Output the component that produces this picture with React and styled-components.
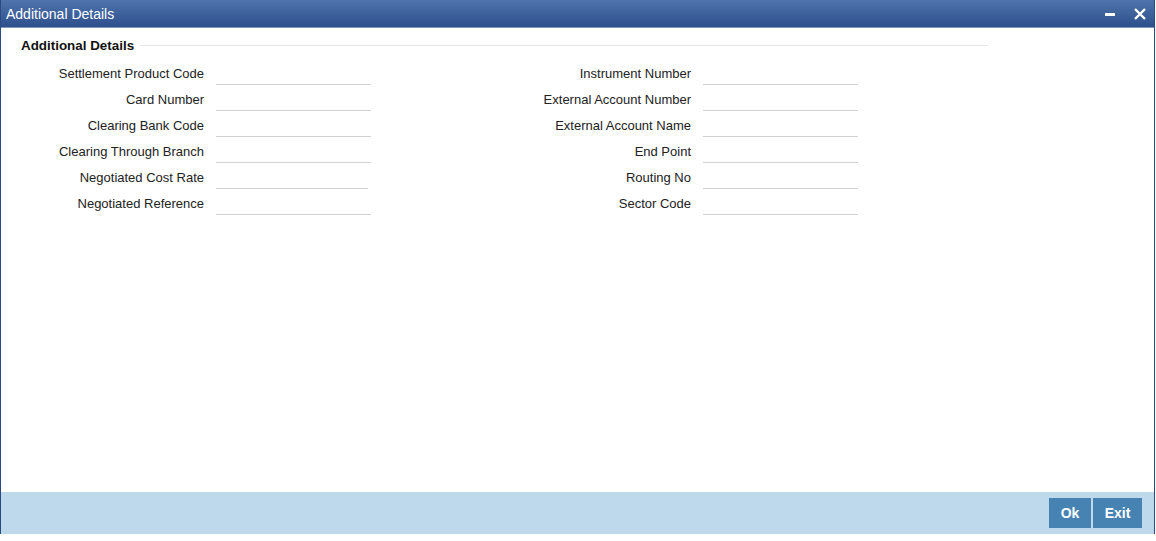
import React from "react";
import styled, { createGlobalStyle } from "styled-components";

const Global = createGlobalStyle`
  html, body { margin: 0; padding: 0; background: #fff; }
  body { font-family: "Liberation Sans", Arial, sans-serif; }
`;

const Window = styled.div`
  width: 1153px;
  height: 534px;
  display: flex;
  flex-direction: column;
  border-left: 1px solid #2a4b82;
  border-right: 1px solid #2a4b82;
  background: #fff;
`;

const TitleBar = styled.div`
  height: 27px;
  flex: none;
  display: flex;
  align-items: center;
  justify-content: space-between;
  padding: 0 6px 0 5px;
  background: linear-gradient(#4f74ab, #2d508d);
  border-bottom: 1px solid #7f97b8;
  color: #fff;
  font-size: 14px;
`;

const Controls = styled.div`
  display: flex;
  align-items: center;
  gap: 18px;
  padding-right: 2px;
`;

const Body = styled.div`
  flex: 1;
  padding: 9px 0 0 20px;
`;

const Section = styled.div`
  width: 967px;
`;

const Legend = styled.div`
  display: flex;
  align-items: center;
  gap: 6px;
  height: 16px;
  font-size: 13.4px;
  font-weight: bold;
  color: #111;
  &::after {
    content: "";
    flex: 1;
    height: 1px;
    background: #e6e6e6;
  }
`;

const Columns = styled.div`
  display: grid;
  grid-template-columns: 350px 350px;
  column-gap: 137px;
  margin-top: 7px;
`;

const Column = styled.div`
  display: flex;
  flex-direction: column;
`;

const Row = styled.div`
  display: grid;
  grid-template-columns: 183px 155px;
  column-gap: 12px;
  align-items: center;
  height: 26px;
`;

const Label = styled.label`
  text-align: right;
  font-size: 13px;
  color: #222;
  white-space: nowrap;
`;

const Input = styled.input`
  box-sizing: border-box;
  width: ${(p) => p.$w || 155}px;
  height: 21px;
  margin-top: 2px;
  border: none;
  border-bottom: 1px solid #d2d2d2;
  outline: none;
  background: transparent;
  font-family: inherit;
  font-size: 13px;
  padding: 0 3px;
`;

const Footer = styled.div`
  height: 42px;
  flex: none;
  display: flex;
  align-items: center;
  justify-content: flex-end;
  gap: 2px;
  padding-right: 12px;
  background: #bed9ec;
`;

const Button = styled.button`
  height: 30px;
  width: ${(p) => p.$w}px;
  border: none;
  background: #4682b2;
  color: #fff;
  font-family: "Liberation Sans", Arial, sans-serif;
  font-weight: bold;
  font-size: 14px;
  padding: 0;
  cursor: pointer;
`;

const left = [
  ["Settlement Product Code"],
  ["Card Number"],
  ["Clearing Bank Code"],
  ["Clearing Through Branch"],
  ["Negotiated Cost Rate", 152],
  ["Negotiated Reference"],
];

const right = [
  ["Instrument Number"],
  ["External Account Number"],
  ["External Account Name"],
  ["End Point"],
  ["Routing No"],
  ["Sector Code"],
];

function Field({ label, w }) {
  return (
    <Row>
      <Label>{label}</Label>
      <Input $w={w} type="text" />
    </Row>
  );
}

export default function App() {
  return (
    <>
      <Global />
      <Window>
        <TitleBar>
          <span>Additional Details</span>
          <Controls>
            <svg width="11" height="11" viewBox="0 0 11 11">
              <rect x="0" y="5" width="10" height="3" fill="#fff" />
            </svg>
            <svg width="12" height="12" viewBox="0 0 12 12">
              <path d="M1 1 L11 11 M11 1 L1 11" stroke="#fff" strokeWidth="2.4" />
            </svg>
          </Controls>
        </TitleBar>
        <Body>
          <Section>
            <Legend>Additional Details</Legend>
            <Columns>
              <Column>
                {left.map(([l, w]) => (
                  <Field key={l} label={l} w={w} />
                ))}
              </Column>
              <Column>
                {right.map(([l, w]) => (
                  <Field key={l} label={l} w={w} />
                ))}
              </Column>
            </Columns>
          </Section>
        </Body>
        <Footer>
          <Button $w={42}>Ok</Button>
          <Button $w={49}>Exit</Button>
        </Footer>
      </Window>
    </>
  );
}
